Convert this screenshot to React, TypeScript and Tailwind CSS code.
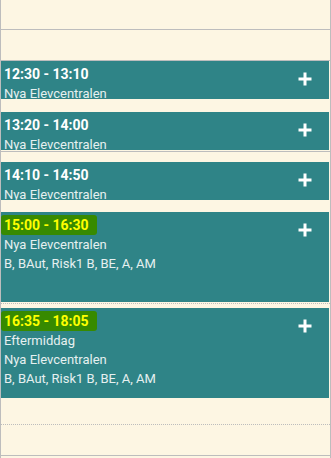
import React from "react";

type Ev = {
  time: string;
  lines: string[];
  h: string;
  marked?: boolean;
};

function Plus() {
  return (
    <svg width="14" height="14" viewBox="0 0 14 14" className="shrink-0">
      <path d="M7 0.5v13M0.5 7h13" stroke="#fff" strokeWidth="3" />
    </svg>
  );
}

function Event({ ev }: { ev: Ev }) {
  return (
    <div
      className={`mr-[1px] flex overflow-hidden bg-[#2f8487] pl-[3px] pr-[17px] ${ev.h}`}
    >
      <div className="min-w-0 flex-1 pt-[2px]">
        <div className="h-[21px] leading-[21px]">
          {ev.marked ? (
            <span className="-ml-[3px] inline-block rounded-[3px] bg-[#378a00] pl-[3px] pr-[8px] text-[14px] font-bold leading-[20px] text-[#ffff00]">
              {ev.time}
            </span>
          ) : (
            <span className="text-[14px] font-bold text-white">{ev.time}</span>
          )}
        </div>
        {ev.lines.map((l, i) => (
          <div key={i} className="text-[13px] leading-[19px] text-[#e6f0f0]">
            {l}
          </div>
        ))}
      </div>
      <div className="pt-[11px]">
        <Plus />
      </div>
    </div>
  );
}

const ev1: Ev = { time: "12:30 - 13:10", lines: ["Nya Elevcentralen"], h: "h-[38px]" };
const ev2: Ev = { time: "13:20 - 14:00", lines: ["Nya Elevcentralen"], h: "h-[38px]" };
const ev3: Ev = { time: "14:10 - 14:50", lines: ["Nya Elevcentralen"], h: "h-[38px]" };
const ev4: Ev = {
  time: "15:00 - 16:30",
  lines: ["Nya Elevcentralen", "B, BAut, Risk1 B, BE, A, AM"],
  h: "h-[90px]",
  marked: true,
};
const ev5: Ev = {
  time: "16:35 - 18:05",
  lines: ["Eftermiddag", "Nya Elevcentralen", "B, BAut, Risk1 B, BE, A, AM"],
  h: "h-[90px]",
  marked: true,
};

export default function App() {
  return (
    <div
      className="h-[458px] w-[331px] overflow-hidden border-x border-[#bdbdbd] bg-[#fdf6e3]"
      style={{ fontFamily: "Roboto, 'Liberation Sans', sans-serif" }}
    >
      <div className="h-[30px] border-b border-[#bdbdbd]" />
      <div className="h-[31px] border-b border-[#bdbdbd]" />
      <Event ev={ev1} />
      <div className="h-[13px]" />
      <Event ev={ev2} />
      <div className="h-[12px] pt-[1px]">
        <div className="border-t border-[#bdbdbd]" />
      </div>
      <Event ev={ev3} />
      <div className="h-[12px]" />
      <Event ev={ev4} />
      <div className="h-[6px] pt-[1px]">
        <div className="border-t border-dotted border-[#bdbdbd]" />
      </div>
      <Event ev={ev5} />
      <div className="h-[27px] border-b border-dotted border-[#bdbdbd]" />
      <div className="h-[31px] border-b border-[#bdbdbd]" />
    </div>
  );
}
